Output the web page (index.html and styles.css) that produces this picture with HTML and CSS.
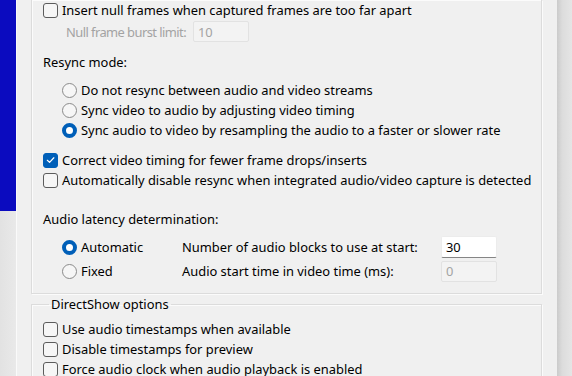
FILE: index.html
```html
<!DOCTYPE html>
<html>
<head>
<meta charset="utf-8">
<link rel="stylesheet" href="styles.css">
</head>
<body>
<div class="screen">
  <div class="desk">
    <div class="desk-blue"></div>
    <div class="desk-grey"></div>
  </div>
  <div class="dialog">
    <div class="group group-top">
      <div class="opt"><span class="cb"></span><span>Insert null frames when captured frames are too far apart</span></div>
      <div class="burst">
        <span class="muted burst-label">Null frame burst limit:</span>
        <span class="input disabled">10</span>
      </div>
      <div class="heading heading-resync">Resync mode:</div>
      <div class="radios">
        <div class="opt"><span class="rb"></span><span>Do not resync between audio and video streams</span></div>
        <div class="opt"><span class="rb"></span><span>Sync video to audio by adjusting video timing</span></div>
        <div class="opt"><span class="rb on"></span><span>Sync audio to video by resampling the audio to a faster or slower rate</span></div>
      </div>
      <div class="checks">
        <div class="opt"><span class="cb on"><svg viewBox="0 0 14 14" width="14" height="14"><path d="M3.6 7.3 L6 9.6 L10.6 4.6" fill="none" stroke="#fff" stroke-width="1.3" stroke-linecap="round" stroke-linejoin="round"/></svg></span><span>Correct video timing for fewer frame drops/inserts</span></div>
        <div class="opt"><span class="cb"></span><span>Automatically disable resync when integrated audio/video capture is detected</span></div>
      </div>
      <div class="heading heading-latency">Audio latency determination:</div>
      <div class="latency">
        <div class="opt"><span class="rb on"></span><span>Automatic</span></div>
        <span class="lat-label">Number of audio blocks to use at start:</span>
        <span class="input active">30</span>
        <div class="opt"><span class="rb"></span><span>Fixed</span></div>
        <span class="lat-label">Audio start time in video time (ms):</span>
        <span class="input disabled">0</span>
      </div>
    </div>
    <fieldset class="group group-ds">
      <legend>DirectShow options</legend>
      <div class="opt"><span class="cb"></span><span>Use audio timestamps when available</span></div>
      <div class="opt"><span class="cb"></span><span>Disable timestamps for preview</span></div>
      <div class="opt"><span class="cb"></span><span>Force audio clock when audio playback is enabled</span></div>
    </fieldset>
  </div>
  <div class="shadow"></div>
</div>
</body>
</html>
```

FILE: styles.css
```css
* { box-sizing: border-box; }
html, body { margin: 0; padding: 0; }
body {
  width: 572px;
  height: 376px;
  overflow: hidden;
  font-family: "Noto Sans", "Segoe UI", sans-serif;
  font-size: 12.9px;
  color: #000;
  background: #e6e6e6;
}
.screen { display: flex; height: 376px; }
.desk { width: 16px; display: flex; flex-direction: column; }
.desk-blue { height: 211px; background: #0b0bbf; }
.desk-grey { flex: 1; background: linear-gradient(to right, #e2e2e2, #e9e9e9); }
.dialog {
  width: 541px;
  background: #f0f0f0;
  border-left: 1px solid #fafafa;
  padding: 0 15px 0 14px;
  overflow: hidden;
}
.shadow { flex: 1; background: linear-gradient(to right, #cbcbcb, #dcdcdc 35%, #e5e5e5); }

.group {
  border: 1px solid #dcdcdc;
  box-shadow: 1px 1px 0 #fbfbfb, inset 1px 1px 0 #fbfbfb;
  margin: 0;
}
.group-top { border-top: none; padding: 0 0 11px 11px; }

.opt { display: flex; align-items: center; height: 20px; gap: 4px; white-space: nowrap; }
.cb {
  width: 15px; height: 15px; flex: none;
  border: 1px solid #5c5c5c; border-radius: 3px; background: #f6f6f6;
  display: flex; align-items: center; justify-content: center;
}
.cb.on { background: #005fb8; border-color: #005fb8; }
.cb svg { display: block; }
.rb {
  width: 15px; height: 15px; flex: none;
  border: 1px solid #8a8a8a; border-radius: 50%; background: #f6f6f6;
}
.rb.on { border: 4.5px solid #005fb8; background: #fff; }

.burst { display: flex; align-items: center; height: 21px; margin-top: 1px; padding-left: 23px; white-space: nowrap; }
.burst-label { width: 127px; flex: none; letter-spacing: -0.55px; }
.muted { color: #a3a3a3; }
.input {
  display: flex; align-items: center; flex: none;
  width: 56px; height: 21px; padding-left: 4px;
  border: 1px solid #e2e2e2; border-radius: 2px;
  background: #f3f3f3; color: #a3a3a3;
}
.input.active { height: 22px; background: #fff; color: #000; border-color: #ececec; border-bottom-color: #858585; }

.heading { height: 20px; display: flex; align-items: center; white-space: nowrap; }
.heading-resync { margin-top: 10px; }
.radios { margin-top: 8px; padding-left: 19px; }
.checks { margin-top: 10px; }
.heading-latency { margin-top: 19px; }
.latency {
  margin-top: 7px;
  padding-left: 19px;
  display: grid;
  grid-template-columns: 120px 259px 56px;
  grid-auto-rows: 22px;
  row-gap: 2px;
  align-items: center;
  white-space: nowrap;
}
.latency .opt { height: 22px; }

.group-ds { margin-top: 2px; padding: 7px 0 0 11px; border-bottom: none; }
.group-ds legend { padding: 0 2px; margin-left: 6px; line-height: 16px; white-space: nowrap; }
```
